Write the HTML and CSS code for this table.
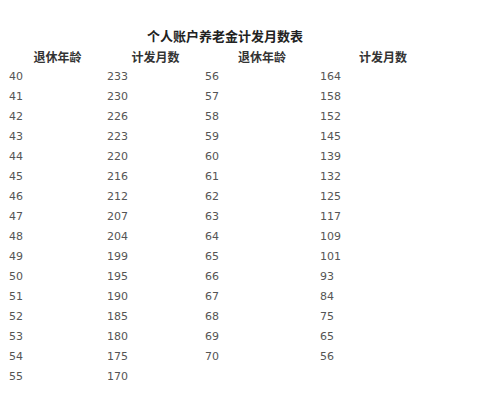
FILE: index.html
```html
<!DOCTYPE html>
<html lang="zh-CN">
<head>
<meta charset="utf-8">
<title>个人账户养老金计发月数表</title>
<link rel="stylesheet" href="styles.css">
</head>
<body>
<div class="sheet">
  <div class="title">个人账户养老金计发月数表</div>
  <div class="grid">
    <div class="head">退休年龄</div><div class="head">计发月数</div><div class="head">退休年龄</div><div class="head">计发月数</div>
    <div class="cell">40</div><div class="cell">233</div><div class="cell">56</div><div class="cell">164</div>
    <div class="cell">41</div><div class="cell">230</div><div class="cell">57</div><div class="cell">158</div>
    <div class="cell">42</div><div class="cell">226</div><div class="cell">58</div><div class="cell">152</div>
    <div class="cell">43</div><div class="cell">223</div><div class="cell">59</div><div class="cell">145</div>
    <div class="cell">44</div><div class="cell">220</div><div class="cell">60</div><div class="cell">139</div>
    <div class="cell">45</div><div class="cell">216</div><div class="cell">61</div><div class="cell">132</div>
    <div class="cell">46</div><div class="cell">212</div><div class="cell">62</div><div class="cell">125</div>
    <div class="cell">47</div><div class="cell">207</div><div class="cell">63</div><div class="cell">117</div>
    <div class="cell">48</div><div class="cell">204</div><div class="cell">64</div><div class="cell">109</div>
    <div class="cell">49</div><div class="cell">199</div><div class="cell">65</div><div class="cell">101</div>
    <div class="cell">50</div><div class="cell">195</div><div class="cell">66</div><div class="cell">93</div>
    <div class="cell">51</div><div class="cell">190</div><div class="cell">67</div><div class="cell">84</div>
    <div class="cell">52</div><div class="cell">185</div><div class="cell">68</div><div class="cell">75</div>
    <div class="cell">53</div><div class="cell">180</div><div class="cell">69</div><div class="cell">65</div>
    <div class="cell">54</div><div class="cell">175</div><div class="cell">70</div><div class="cell">56</div>
    <div class="cell">55</div><div class="cell">170</div><div class="cell"></div><div class="cell"></div>
  </div>
</div>
</body>
</html>
```
FILE: styles.css
```css
html, body {
  margin: 0;
  padding: 0;
  background: #ffffff;
}
body {
  font-family: "DejaVu Sans", Verdana, sans-serif;
}
.sheet {
  width: 438px;
  padding: 26px 0 0 6px;
}
.title {
  height: 20px;
  line-height: 20px;
  text-align: center;
  font-family: "Noto Sans CJK SC", sans-serif;
  font-weight: bold;
  font-size: 13px;
  color: #222222;
}
.grid {
  display: grid;
  grid-template-columns: 98px 98px 115px 127px;
  grid-template-rows: 21px;
  grid-auto-rows: 20px;
}
.head {
  line-height: 21px;
  text-align: center;
  padding-left: 5px;
  font-family: "Noto Sans CJK SC", sans-serif;
  font-weight: bold;
  font-size: 12px;
  color: #333333;
}
.cell {
  line-height: 20px;
  padding-left: 3px;
  font-size: 11px;
  color: #555555;
}
```
